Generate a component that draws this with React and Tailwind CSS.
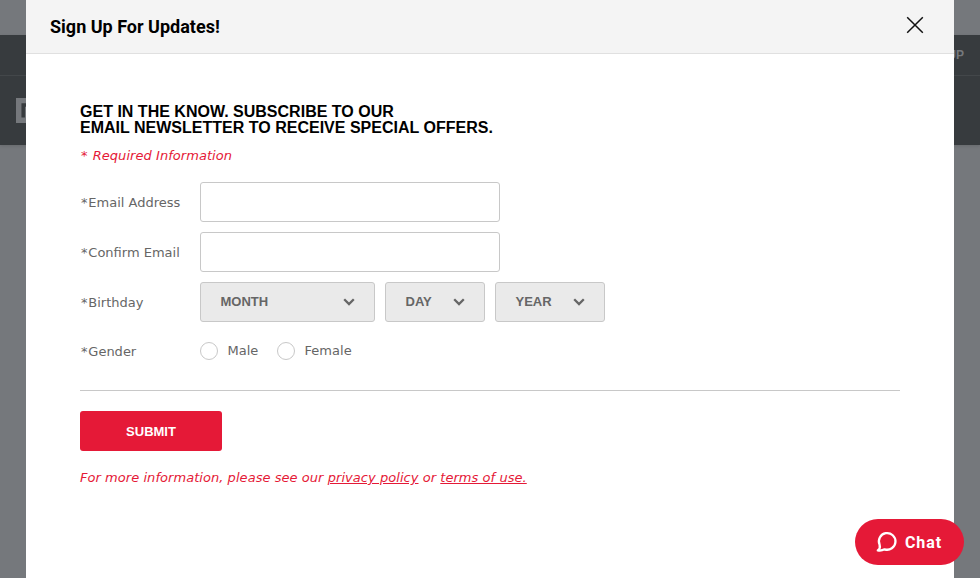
import React from 'react';

const Chevron = () => (
  <svg width="12" height="8" viewBox="0 0 12 8" fill="none" stroke="#666" strokeWidth="2.3">
    <path d="M1.2 1.2 6 6 10.8 1.2" />
  </svg>
);

const Row = ({ label, children }) => (
  <div className="flex h-10 items-center">
    <label className="w-[120px] pt-px pl-px text-[13px]">
      <span className="tracking-[0.8px]">*</span>
      {label}
    </label>
    {children}
  </div>
);

const Select = ({ label, className }) => (
  <button
    type="button"
    className={`flex h-10 items-center justify-between rounded-[3px] border border-[#c8c8c8] bg-[#eaeaea] pr-[19px] pl-[19.5px] font-['Liberation_Sans',sans-serif] text-[13px] font-bold ${className}`}
  >
    <span className="-mt-px">{label}</span>
    <Chevron />
  </button>
);

const Radio = ({ label, className }) => (
  <label className={`flex items-center text-[13px] ${className}`}>
    <span className="mr-[9.5px] size-[18px] rounded-full border border-[#c8c8c8] bg-white" />
    {label}
  </label>
);

function Backdrop() {
  return (
    <div className="h-full bg-[#75787c] pt-[35px]">
      <div className="h-[110px] bg-[#373b3e] shadow-[0_1px_3px_rgba(0,0,0,0.12)]">
        <div className="flex h-[41px] items-center justify-end border-b border-[#43474a] pr-4 font-['Liberation_Sans',sans-serif] text-[12px] font-bold text-[#75787c]">
          SIGN UP
        </div>
        <div className="flex h-[69px] items-center pl-4">
          <svg width="80" height="25" viewBox="0 0 80 25">
            <path fill="#75787c" d="M0 0h80v25H0z" />
            <path fill="none" stroke="#373b3e" strokeWidth="3.5" d="M7.2 19.5V7H16v12.5" />
          </svg>
        </div>
      </div>
    </div>
  );
}

export default function App() {
  return (
    <div className="relative h-[578px] w-[980px] overflow-hidden font-['DejaVu_Sans',Verdana,sans-serif] text-[#666]">
      <Backdrop />
      <div className="absolute inset-y-0 left-[26px] flex w-[928px] flex-col bg-white">
        <header className="flex h-[54px] items-center justify-between border-b border-[#e0e0e0] bg-[#f4f4f4] pr-[30px] pl-6">
          <h1 className="font-[Roboto,sans-serif] text-[18px] font-bold text-black">Sign Up For Updates!</h1>
          <svg className="-mt-[3px]" width="18" height="18" viewBox="0 0 18 18" stroke="#111" strokeWidth="1.5">
            <path d="m1.2 1.2 15.6 15.6M16.8 1.2 1.2 16.8" />
          </svg>
        </header>
        <main className="px-[54px] pt-[50px]">
          <h2 className="font-['Liberation_Sans',sans-serif] text-[16px] leading-4 font-bold tracking-[0.01px] whitespace-nowrap text-black">
            GET IN THE KNOW. SUBSCRIBE TO OUR
            <br />
            EMAIL NEWSLETTER TO RECEIVE SPECIAL OFFERS.
          </h2>
          <p className="mt-[10px] pl-px text-[13px] leading-5 tracking-[0.05px] text-[#e51937] italic">
            <span className="tracking-[1px]">*</span> Required Information
          </p>
          <form className="mt-4 flex flex-col gap-[10px]">
            <Row label="Email Address">
              <input className="h-10 w-[300px] rounded-[3px] border border-[#c8c8c8] px-3" />
            </Row>
            <Row label="Confirm Email">
              <input className="h-10 w-[300px] rounded-[3px] border border-[#c8c8c8] px-3" />
            </Row>
            <Row label="Birthday">
              <div className="flex gap-[10px]">
                <Select label="MONTH" className="w-[175px]" />
                <Select label="DAY" className="w-[100px]" />
                <Select label="YEAR" className="w-[110px]" />
              </div>
            </Row>
            <div className="-mt-px">
              <Row label="Gender">
                <Radio label="Male" className="w-[77px]" />
                <Radio label="Female" className="tracking-[0.05px]" />
              </Row>
            </div>
          </form>
          <div className="mt-[19px] border-t border-[#c8c8c8] pt-5">
            <button
              type="button"
              className="flex h-10 w-[142px] items-center justify-center rounded-[3px] bg-[#e51937] pt-[2px] font-['Liberation_Sans',sans-serif] text-[13px] font-bold text-white"
            >
              SUBMIT
            </button>
            <p className="mt-[17px] text-[13px] leading-5 tracking-[0.05px] whitespace-nowrap text-[#e51937] italic">
              For more information, please see our <a className="underline">privacy policy</a> or{' '}
              <a className="underline">terms of use.</a>
            </p>
          </div>
        </main>
      </div>
      <button
        type="button"
        className="absolute top-[519px] left-[855px] flex h-[46px] w-[109px] items-center rounded-full bg-[#e51937] pl-[21px] font-[Roboto,sans-serif] text-[16px] font-bold tracking-[0.9px] text-white"
      >
        <svg className="mr-[8px]" width="21" height="22" viewBox="0 0 21 22" fill="none" stroke="#fff" strokeWidth="2.3" strokeLinejoin="round">
          <path d="M3.6 13.8A8.3 8.3 0 1 1 8.6 18.3C6.6 19.4 4.3 19.9 1.8 19.4 3.6 18.2 4.3 16.4 3.6 13.8Z" />
        </svg>
        <span className="pt-[2px]">Chat</span>
      </button>
    </div>
  );
}
